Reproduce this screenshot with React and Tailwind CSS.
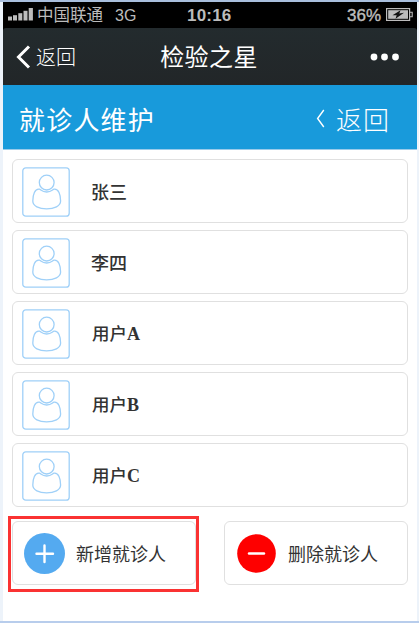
import React from "react";

const patients = [
  { han: "张三", latin: "" },
  { han: "李四", latin: "" },
  { han: "用户", latin: "A" },
  { han: "用户", latin: "B" },
  { han: "用户", latin: "C" },
];

function StatusBar() {
  return (
    <div className="flex h-[26px] shrink-0 items-center bg-black pl-[5px] pr-1 text-[#bcbcbc]">
      <svg width="25" height="13" viewBox="0 0 25 13" fill="#bcbcbc" className="mb-[2px] shrink-0">
        <rect x="0" y="8.5" width="4" height="4" />
        <rect x="5" y="7.2" width="4" height="5.3" />
        <rect x="10.3" y="5.2" width="4" height="7.3" />
        <rect x="15.5" y="2.8" width="4" height="9.7" />
        <rect x="20.7" y="0" width="4.2" height="12.5" />
      </svg>
      <span className="ml-1 w-[78px] pb-px text-[16.5px] leading-none whitespace-nowrap">中国联通</span>
      <span className="w-[72px] pt-px font-['Liberation_Sans'] text-[16px] leading-none">3G</span>
      <span className="font-['Liberation_Sans'] text-[17px] font-bold leading-none tracking-[0.2px]">10:16</span>
      <span className="ml-auto font-['Liberation_Sans'] text-[17px] leading-none [-webkit-text-stroke:0.4px_#bcbcbc]">36%</span>
      <svg width="27" height="13" viewBox="0 0 27 13" className="mb-[2px] ml-[5px] shrink-0">
        <rect x="0.6" y="0.6" width="23" height="11.8" fill="none" stroke="#bcbcbc" strokeWidth="1.2" />
        <rect x="2.2" y="2.2" width="19.8" height="8.6" fill="#bcbcbc" />
        <path d="M24 4.2h2.2v4.6H24" fill="none" stroke="#bcbcbc" strokeWidth="1.1" />
        <path d="M6.5 7.2L14.5 2.2l-1.2 3.2 4.7-.6-8.5 6 1.2-3.6z" fill="#111" />
      </svg>
    </div>
  );
}

function TitleBar() {
  return (
    <div className="grid h-[57px] shrink-0 grid-cols-3 items-center rounded-t-[3px] bg-linear-to-b from-[#232b2e] to-[#222628] pr-[17px] pl-[13px] text-white">
      <div className="flex items-center">
        <svg width="15" height="24" viewBox="0 0 15 24" fill="none" stroke="white" strokeWidth="3" className="shrink-0">
          <path d="M13 1.5L2.5 12 13 22.5" />
        </svg>
        <span className="ml-[5px] text-[20px] leading-none font-light">返回</span>
      </div>
      <div className="justify-self-center pr-px pb-[2px] pl-[3px] text-[24px] leading-none tracking-[0.4px] whitespace-nowrap">检验之星</div>
      <svg width="30" height="8" viewBox="0 0 30 8" fill="white" className="justify-self-end">
        <circle cx="4" cy="4" r="3.4" />
        <circle cx="14.5" cy="4" r="3.4" />
        <circle cx="25.5" cy="4" r="3.4" />
      </svg>
    </div>
  );
}

function PageHeader() {
  return (
    <div className="flex h-[65px] shrink-0 items-center justify-between border-b border-[#9acbea] bg-[#189adb] pt-[3px] pr-[27px] pl-4 text-white">
      <h1 className="text-[26px] leading-none tracking-[1.2px]">就诊人维护</h1>
      <div className="flex items-center">
        <svg width="9" height="19" viewBox="0 0 9 19" fill="none" stroke="white" strokeWidth="1.4">
          <path d="M7.8 1L1.6 9.5 7.8 18" />
        </svg>
        <span className="ml-[11px] text-[26px] leading-none font-light tracking-[1px]">返回</span>
      </div>
    </div>
  );
}

function Avatar() {
  return (
    <svg width="48" height="50" viewBox="0 0 48 50" fill="none" stroke="#9fd0f8" strokeWidth="1.3" className="shrink-0">
      <rect x="0.8" y="0.8" width="46.4" height="48.4" rx="3" />
      <circle cx="24.7" cy="15.6" r="7.4" />
      <path d="M17.4 22.2C12.8 21.6 10.8 27.5 10.8 34C10.8 39 17 41.9 24.6 41.9S38.6 39 38.6 34C38.6 27.5 36.6 21.6 32 22.2C30.6 22.4 29.5 25 24.7 25S18.8 22.4 17.4 22.2Z" />
    </svg>
  );
}

function PatientCard({ han, latin }) {
  return (
    <li className="flex h-[64px] items-center rounded-[6px] border border-[#e0e0e0] pt-[2px] pl-[9px] text-[#333]">
      <Avatar />
      <span className={latin ? "ml-[22px] pb-px text-[17.5px] leading-none font-medium whitespace-nowrap" : "ml-[21px] pb-[3px] text-[18px] leading-none font-medium whitespace-nowrap"}>
        {han}
        {latin && <span className="font-['Liberation_Serif'] text-[18px] font-bold">{latin}</span>}
      </span>
    </li>
  );
}

export default function App() {
  return (
    <div className="h-[623px] w-[419px] overflow-hidden border-t-2 border-b-2 border-t-[#a9bfdd] border-b-[#b8cdec] font-['Noto_Sans_CJK_SC',sans-serif]">
      <div className="flex h-full flex-col border-r-2 border-l-3 border-[#edf3fa] bg-white">
        <div className="flex shrink-0 flex-col bg-black">
          <StatusBar />
          <TitleBar />
        </div>
        <PageHeader />
        <ul className="flex flex-col gap-[7px] px-[9px] pt-[9px]">
          {patients.map((p) => (
            <PatientCard key={p.han + p.latin} {...p} />
          ))}
        </ul>
        <div className="flex justify-between pt-[9px] pr-[9px] pl-[5px]">
          <div className="h-[76px] w-[191px] border-3 border-[#fa3232] pt-[2px] pl-px">
            <button className="flex h-[64px] w-[184px] items-center rounded-[6px] border border-[#e0e0e0] pl-[11px] text-[#333]">
              <svg width="41" height="41" viewBox="0 0 41 41" className="shrink-0">
                <circle cx="20.5" cy="20.5" r="20.5" fill="#54aaf0" />
                <path d="M12.5 20.7h16.5M20.5 12.5v16.5" stroke="white" strokeWidth="2.4" strokeLinecap="round" />
              </svg>
              <span className="ml-[11px] text-[18px] leading-none">新增就诊人</span>
            </button>
          </div>
          <button className="mt-[5px] flex h-[64px] w-[184px] items-center rounded-[6px] border border-[#e0e0e0] pl-3 text-[#333]">
            <svg width="39" height="39" viewBox="0 0 39 39" className="shrink-0">
              <circle cx="19.5" cy="19.5" r="19.3" fill="#fe0000" />
              <path d="M12 19.5h15" stroke="white" strokeWidth="2.4" strokeLinecap="round" />
            </svg>
            <span className="ml-3 text-[18px] leading-none">删除就诊人</span>
          </button>
        </div>
      </div>
    </div>
  );
}
